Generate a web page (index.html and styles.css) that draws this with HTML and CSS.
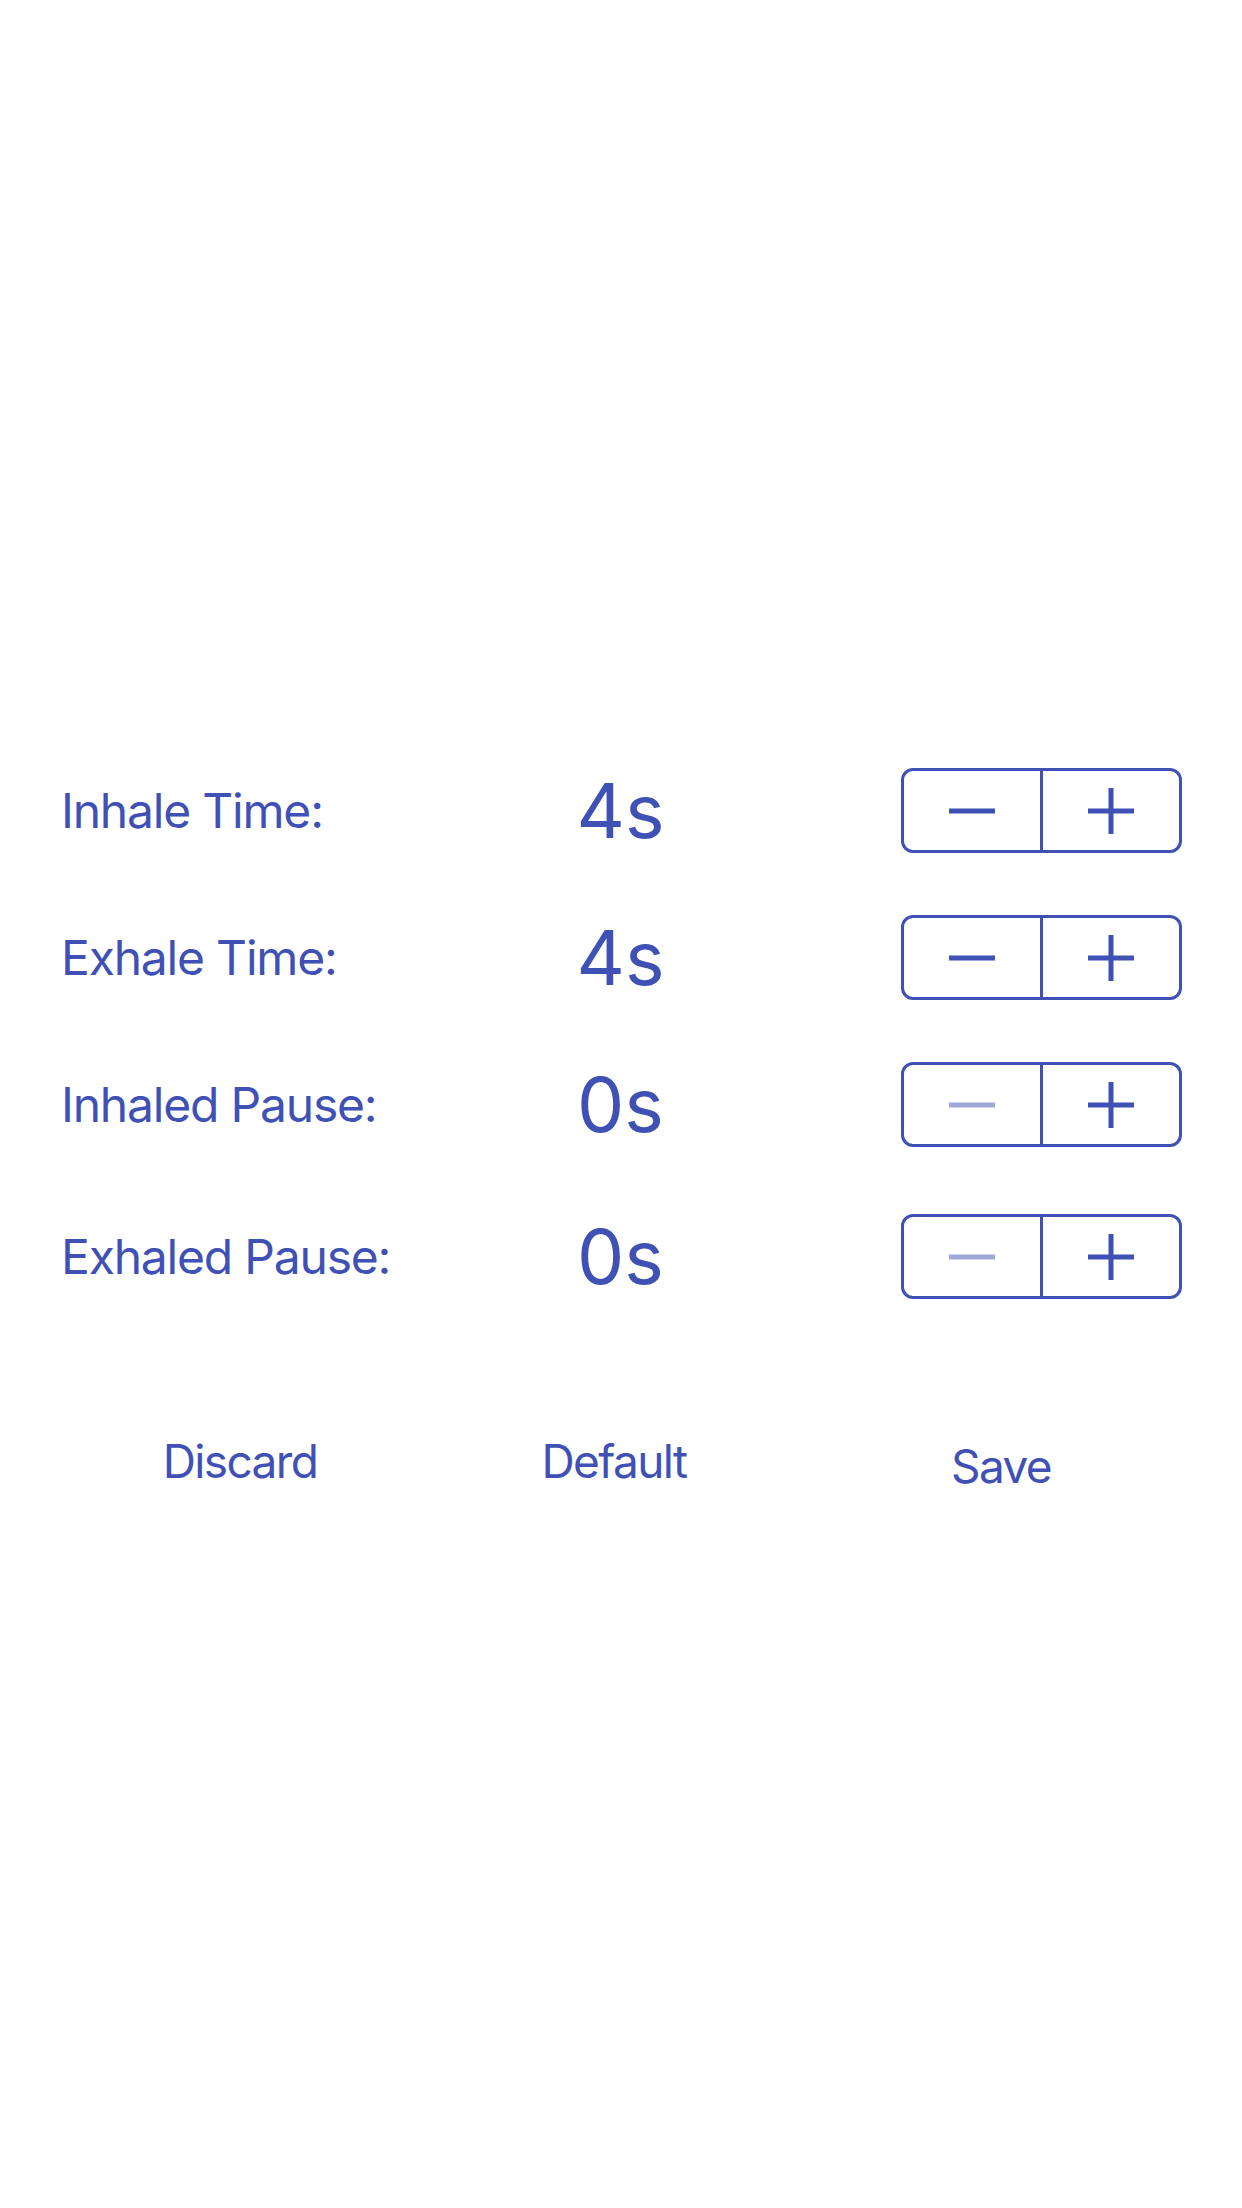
FILE: index.html
```html
<!DOCTYPE html>
<html lang="en">
<head>
  <meta charset="UTF-8" />
  <meta name="viewport" content="width=device-width, initial-scale=1.0" />
  <title>Breathing Settings</title>
  <link rel="stylesheet" href="styles.css">
</head>
<body>
  <div class="screen">
    <div class="settings">
      <div class="row">
        <span class="label">Inhale Time:</span>
        <span class="value">4s</span>
        <div class="stepper">
          <button class="step">
            <svg viewBox="0 0 46 46" width="46" height="46"><rect x="0" y="20.5" width="46" height="5" /></svg>
          </button>
          <button class="step">
            <svg viewBox="0 0 46 46" width="46" height="46"><rect x="0" y="20.5" width="46" height="5" /><rect x="20.5" y="0" width="5" height="46" /></svg>
          </button>
        </div>
      </div>
      <div class="row">
        <span class="label">Exhale Time:</span>
        <span class="value">4s</span>
        <div class="stepper">
          <button class="step">
            <svg viewBox="0 0 46 46" width="46" height="46"><rect x="0" y="20.5" width="46" height="5" /></svg>
          </button>
          <button class="step">
            <svg viewBox="0 0 46 46" width="46" height="46"><rect x="0" y="20.5" width="46" height="5" /><rect x="20.5" y="0" width="5" height="46" /></svg>
          </button>
        </div>
      </div>
      <div class="row">
        <span class="label">Inhaled Pause:</span>
        <span class="value">0s</span>
        <div class="stepper">
          <button class="step disabled">
            <svg viewBox="0 0 46 46" width="46" height="46"><rect x="0" y="20.5" width="46" height="5" /></svg>
          </button>
          <button class="step">
            <svg viewBox="0 0 46 46" width="46" height="46"><rect x="0" y="20.5" width="46" height="5" /><rect x="20.5" y="0" width="5" height="46" /></svg>
          </button>
        </div>
      </div>
      <div class="row last">
        <span class="label">Exhaled Pause:</span>
        <span class="value">0s</span>
        <div class="stepper">
          <button class="step disabled">
            <svg viewBox="0 0 46 46" width="46" height="46"><rect x="0" y="20.5" width="46" height="5" /></svg>
          </button>
          <button class="step">
            <svg viewBox="0 0 46 46" width="46" height="46"><rect x="0" y="20.5" width="46" height="5" /><rect x="20.5" y="0" width="5" height="46" /></svg>
          </button>
        </div>
      </div>
    </div>

    <div class="actions">
      <button class="action">Discard</button>
      <button class="action">Default</button>
      <button class="action save">Save</button>
    </div>
  </div>
</body>
</html>
```

FILE: styles.css
```css
body {
  margin: 0;
  background: #ffffff;
  font-family: Inter, "Liberation Sans", sans-serif;
  color: #3f51b5;
}
.screen {
  width: 1242px;
  height: 2208px;
  padding-top: 768px;
  box-sizing: border-box;
}
.settings {
  display: flex;
  flex-direction: column;
  gap: 62px;
  padding: 0 60px 0 61px;
}
.row {
  display: grid;
  grid-template-columns: 1fr auto 1fr;
  align-items: center;
  height: 85px;
}
.row.last { margin-top: 5px; }
.label {
  font-size: 48px;
  line-height: 1;
  letter-spacing: -1.2px;
}
.value {
  font-size: 75px;
  line-height: 1;
  margin-right: 2px;
}
.stepper {
  justify-self: end;
  display: flex;
  width: 281px;
  height: 85px;
  box-sizing: border-box;
  border: 3px solid #3f51b5;
  border-radius: 12px;
  overflow: hidden;
}
.step {
  flex: 1;
  display: flex;
  align-items: center;
  justify-content: center;
  padding: 0;
  border: none;
  background: none;
  fill: #3f51b5;
}
.step + .step { border-left: 3px solid #3f51b5; }
.step.disabled { fill: #9fa8da; }
.actions {
  display: grid;
  grid-template-columns: 400px 348px 426px;
  padding-left: 40px;
  margin-top: 134px;
}
.action {
  justify-self: center;
  padding: 0;
  border: none;
  background: none;
  font-family: inherit;
  font-size: 46px;
  line-height: 1;
  letter-spacing: -1.6px;
  color: #3f51b5;
}
.action.save { margin-top: 10px; }
```
